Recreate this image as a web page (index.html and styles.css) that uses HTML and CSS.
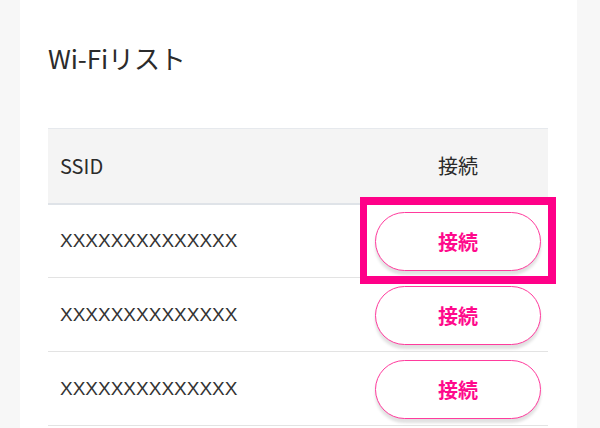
FILE: index.html
```html
<!DOCTYPE html>
<html lang="ja">
<head>
<meta charset="utf-8">
<link rel="stylesheet" href="styles.css">
</head>
<body>
<div class="card">
  <h1 class="title">Wi-Fiリスト</h1>
  <table class="wifi">
    <thead>
      <tr><th class="ssid">SSID</th><th class="conn">接続</th></tr>
    </thead>
    <tbody>
      <tr><td class="ssid">XXXXXXXXXXXXXX</td><td class="conn highlight"><button class="btn">接続</button><span class="mark"></span></td></tr>
      <tr><td class="ssid">XXXXXXXXXXXXXX</td><td class="conn"><button class="btn">接続</button></td></tr>
      <tr><td class="ssid">XXXXXXXXXXXXXX</td><td class="conn"><button class="btn">接続</button></td></tr>
    </tbody>
  </table>
</div>
</body>
</html>
```
FILE: styles.css
```css
html, body {
  margin: 0;
  padding: 0;
  background: #f7f7f7;
}
body {
  font-family: "Noto Sans CJK JP", "Noto Sans", sans-serif;
  color: #333;
  height: 428px;
  overflow: hidden;
}
.card {
  margin: 0 23px 0 20px;
  background: #fff;
  padding: 36px 29px 0 28px;
  min-height: 428px;
  box-sizing: border-box;
}
.title {
  margin: 0;
  font-size: 26px;
  font-weight: 400;
  line-height: 44px;
  height: 92px;
  letter-spacing: -0.1px;
  color: #2b2b2b;
}
.wifi {
  width: 500px;
  border-collapse: collapse;
  font-size: 20px;
}
.wifi thead tr {
  background: #f4f4f4;
  height: 75px;
  border-top: 1px solid #e6e9ed;
  border-bottom: 2px solid #dfe3e8;
}
.wifi th {
  font-weight: 400;
  padding: 0;
  color: #2b2b2b;
}
.wifi th.ssid, .wifi td.ssid {
  text-align: left;
  padding-left: 12px;
}
.wifi .conn {
  width: 180px;
  text-align: center;
  padding: 0;
}
.wifi tbody tr {
  height: 74px;
  border-bottom: 1px solid #e3e3e3;
}
.wifi td {
  padding: 0;
  vertical-align: middle;
}
.wifi td.ssid {
  font-family: "Liberation Sans", sans-serif;
  font-size: 19px;
  letter-spacing: 0;
}
.btn {
  display: block;
  margin: 0 auto;
  width: 166px;
  height: 59px;
  border: 1.5px solid #ff3b9d;
  border-radius: 30px;
  background: #fff;
  color: #ff0a8c;
  font-family: "Noto Sans CJK JP", "Noto Sans", sans-serif;
  font-size: 20px;
  font-weight: 700;
  box-shadow: 0 4px 3px rgba(0, 0, 0, 0.12);
  padding: 0;
  position: relative;
  top: 1px;
}
.highlight {
  position: relative;
}
.mark {
  position: absolute;
  left: -8px;
  right: -8px;
  top: -8px;
  bottom: -7px;
  border: 8px solid #ff0088;
  border-left-width: 7px;
  pointer-events: none;
}
```
